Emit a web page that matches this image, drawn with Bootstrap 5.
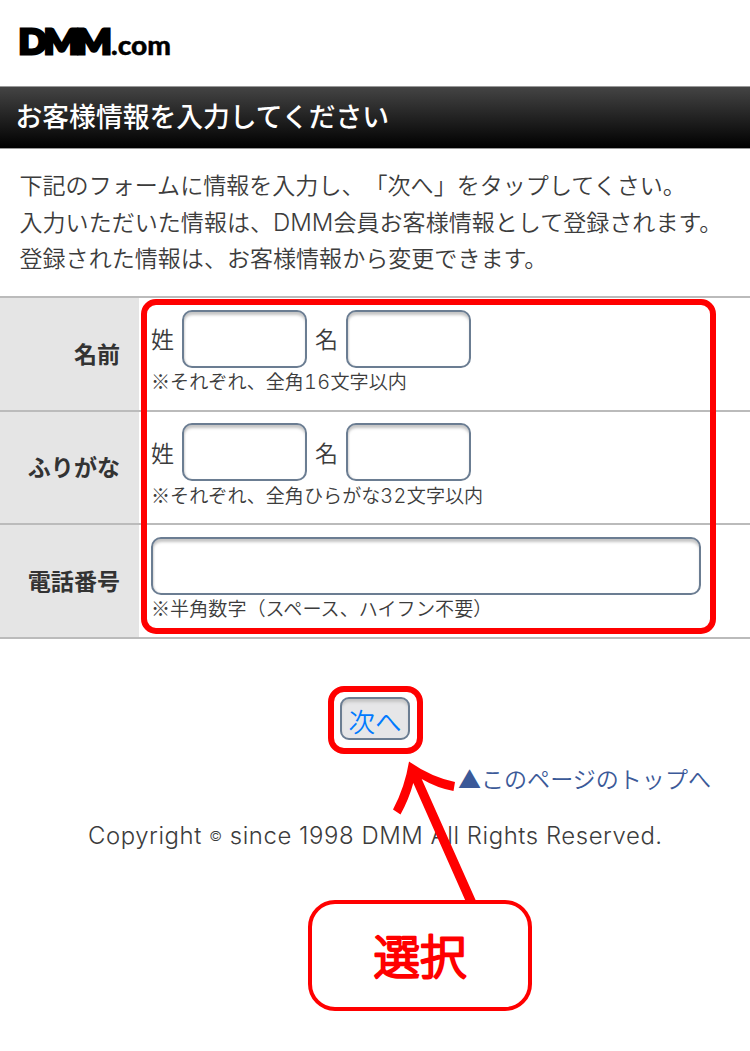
<!doctype html>
<html lang="ja">

<head>
  <meta charset="utf-8">
  <meta name="viewport" content="width=device-width, initial-scale=1">
  <title>お客様情報の入力</title>

  <!-- Bootstrap core CSS -->
  <link href="https://cdn.jsdelivr.net/npm/bootstrap@5.3.0/dist/css/bootstrap.min.css" rel="stylesheet">

  <style>
    body {
      width: 750px;
      height: 1051px;
      overflow: hidden;
      background-color: #fff;
      color: #3c3c3c;
      font-family: "Noto Sans CJK JP", sans-serif;
      font-size: 23.05px;
      font-weight: 350;
      line-height: 36.5px;
      text-spacing-trim: space-all;
    }

    .latin {
      font-family: Inter, "Noto Sans CJK JP", sans-serif;
      font-size: 1.04em;
      font-weight: 300;
      line-height: 1;
    }

    .site-header {
      height: 86px;
    }

    .site-header svg {
      display: block;
    }

    .page-title {
      height: 63px;
      padding-left: 15.5px;
      border-top: 1px solid #999;
      border-bottom: 1px solid #999;
      background-image: linear-gradient(#444, #000);
      color: #fff;
      font-size: 26.8px;
      font-weight: 500;
      line-height: 57px;
    }

    .intro {
      height: 147px;
      padding: 17px 0 0 19.5px;
      white-space: nowrap;
    }

    .form-rows {
      border-bottom: 2px solid #bbb;
      height: 342.5px;
    }

    .form-line {
      height: 113.5px;
      border-top: 2px solid #bbb;
    }

    .line-label {
      width: 139px;
      padding: 0 19px 2px 0;
      background-color: #e5e5e5;
      color: #333;
      font-weight: 700;
    }

    .line-body {
      padding: 12px 0 0 12px;
    }

    .line-fields {
      height: 57px;
    }

    .field {
      height: 58px;
      border: 2px solid #6b7d92;
      border-radius: 10px;
      background-color: #fff;
      box-shadow: inset 0 4px 3px -1px #c4c4c4, inset 2px 0 2px -1px #ddd;
    }

    .field-short {
      width: 125px;
    }

    .field-long {
      width: 550px;
    }

    .note {
      font-size: 19.1px;
      line-height: 28px;
      white-space: nowrap;
    }

    .note .latin {
      font-feature-settings: "tnum";
      letter-spacing: .4px;
    }

    .frame {
      position: absolute;
      border: 6px solid #f00;
      pointer-events: none;
    }

    .frame-form {
      left: 141px;
      top: 3px;
      width: 575px;
      height: 335px;
      border-radius: 15px;
    }

    .frame-next {
      inset: -11px -13px -14px -12px;
      border-radius: 16px;
    }

    .next-area {
      padding-top: 58px;
      height: 121px;
    }

    .btn-next {
      width: 70px;
      height: 43px;
      padding: 6px 0 0;
      border: 2px solid #6b7d92;
      border-radius: 9px;
      background-color: #e6e6e8;
      box-shadow: inset 0 4px 3px -1px #c4c4c4;
      color: #007aff;
      font-size: 26.5px;
      font-weight: 350;
      line-height: 32px;
    }

    .page-top {
      padding-right: 39px;
      color: #3b5998;
      text-decoration: none;
    }

    .copyright {
      margin-top: 20px;
      padding-left: 88px;
      font-size: 23px;
      letter-spacing: .56px;
      white-space: nowrap;
    }

    .copyright .c-sign {
      font-size: 14px;
      vertical-align: 3px;
    }

    .arrow {
      position: absolute;
      left: 0;
      top: 0;
      pointer-events: none;
    }

    .callout {
      width: 224px;
      height: 111px;
      margin: 47px 0 0 308px;
      border: 4px solid #f00;
      border-radius: 27px;
      background-color: #fff;
    }

    .callout svg {
      display: block;
    }
  </style>
</head>

<body class="position-relative">
  <header class="site-header">
    <svg width="200" height="86" role="img" aria-label="DMM.com">
      <g font-family="Lato, sans-serif" font-weight="900">
        <text x="18.500" y="54" font-size="34" textLength="90" lengthAdjust="spacingAndGlyphs" letter-spacing="-3" stroke="#000" stroke-width="3">DMM</text>
        <text x="111" y="55" font-size="26" textLength="60" lengthAdjust="spacingAndGlyphs" stroke="#000" stroke-width=".4">.com</text>
      </g>
    </svg>
  </header>

  <h1 class="page-title m-0">お客様情報を入力してください</h1>

  <p class="intro m-0">
    下記のフォームに情報を入力し、「次へ」をタップしてくさい。<br>
    入力いただいた情報は、<span class="latin">DMM</span>会員お客様情報として登録されます。<br>
    登録された情報は、お客様情報から変更できます。
  </p>

  <form class="form-rows position-relative">
    <div class="form-line d-flex">
      <div class="line-label d-flex align-items-center justify-content-end">名前</div>
      <div class="line-body">
        <div class="line-fields d-flex align-items-center">
          <label for="sei">姓</label>
          <input type="text" id="sei" class="field field-short ms-2">
          <label for="mei" class="ms-2">名</label>
          <input type="text" id="mei" class="field field-short ms-2">
        </div>
        <div class="note">※それぞれ、全角<span class="latin">16</span>文字以内</div>
      </div>
    </div>
    <div class="form-line d-flex">
      <div class="line-label d-flex align-items-center justify-content-end">ふりがな</div>
      <div class="line-body">
        <div class="line-fields d-flex align-items-center">
          <label for="seiKana">姓</label>
          <input type="text" id="seiKana" class="field field-short ms-2">
          <label for="meiKana" class="ms-2">名</label>
          <input type="text" id="meiKana" class="field field-short ms-2">
        </div>
        <div class="note">※それぞれ、全角ひらがな<span class="latin">32</span>文字以内</div>
      </div>
    </div>
    <div class="form-line d-flex">
      <div class="line-label d-flex align-items-center justify-content-end">電話番号</div>
      <div class="line-body">
        <div class="line-fields d-flex align-items-center">
          <input type="tel" id="tel" class="field field-long">
        </div>
        <div class="note">※半角数字（スペース、ハイフン不要）</div>
      </div>
    </div>
    <div class="frame frame-form"></div>
  </form>

  <div class="next-area d-flex justify-content-center align-items-start">
    <div class="position-relative d-flex">
      <button type="button" class="btn-next">次へ</button>
      <div class="frame frame-next"></div>
    </div>
  </div>

  <div class="d-flex justify-content-end">
    <a class="page-top" href="#">▲このページのトップへ</a>
  </div>

  <footer class="copyright"><span class="latin">Copyright <span class="c-sign">©</span> since 1998 DMM All Rights Reserved.</span></footer>

  <div class="callout">
    <svg width="216" height="103">
      <text x="108" y="70" text-anchor="middle" font-size="46.500" font-weight="300" fill="#f00" stroke="#f00" stroke-width="2.600" stroke-linejoin="round">選択</text>
    </svg>
  </div>

  <svg class="arrow" width="750" height="1051" aria-hidden="true">
    <path fill="#f00" d="M409 761.5 Q431 777 455 782 L453.500 791 Q437 788 421.700 779 L476.500 902 H466 L413.300 783 Q409 799 400.500 814.500 L393 809.500 Q405 787 409 761.500Z" />
  </svg>

  <!-- Bootstrap core JavaScript -->
  <script src="https://cdn.jsdelivr.net/npm/bootstrap@5.3.0/dist/js/bootstrap.bundle.min.js"></script>
</body>

</html>
